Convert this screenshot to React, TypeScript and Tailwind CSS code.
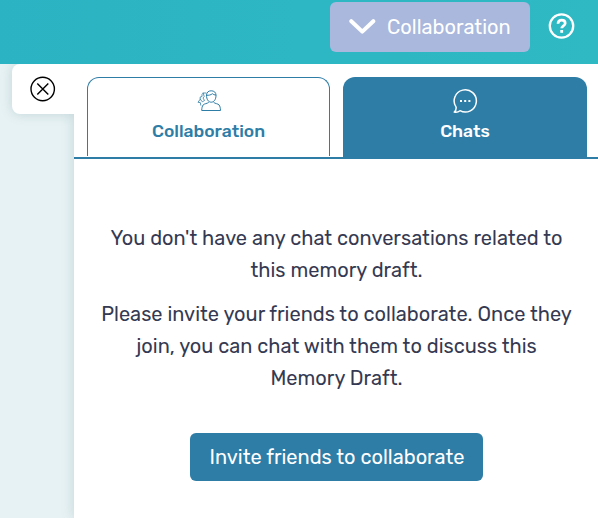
import type { ReactNode } from "react";

function FriendsIcon() {
  return (
    <svg width="24" height="22" viewBox="0 0 24 22" fill="none" stroke="currentColor" strokeWidth="1" strokeLinecap="round" strokeLinejoin="round">
      <path d="M9.500 5.500C9.500 2.300 11.300.8 14.200.8S19 2.300 19 5.500c0 3.900-2 6.700-4.800 6.700S9.500 9.400 9.500 5.500Z" />
      <path d="M9.600 5.300c2.300.1 4.300-.3 5.800-1.600.9.800 2 1.200 3.500 1.400" />
      <path d="M11.500 12.500c-1.200 1.300-4.200 1-5.400 2.500-.9 1.100-1.300 3-1.400 5.500h18.800c-.1-2.500-.5-4.400-1.400-5.500-1.200-1.500-4.100-1.200-5.300-2.500" />
      <path d="M9 3H6.200L5 4.500v2L3.200 7v2.200L1 12.300l2.300.3.500 2.600M6.200 3l1 3.500L6 8l1.500 2.500-2.200 1.300L3.200 9.200" strokeWidth=".8" />
    </svg>
  );
}

function ChatIcon() {
  return (
    <svg width="26" height="26" viewBox="0 0 26 26" fill="none" stroke="currentColor" strokeWidth="1.5" strokeLinejoin="round">
      <path d="M4.100 19.200A11.100 11.100 0 1 1 8 22.700C6.600 23.900 4.300 24.500 2.300 24.100c1.300-1.300 2-3.100 1.800-4.900Z" />
      <path d="M8 13h2M12.200 13h2M16.400 13h2" strokeWidth="2" />
    </svg>
  );
}

function Tab({ active, icon, label }: { active?: boolean; icon: ReactNode; label: string }) {
  return (
    <button
      className={
        active
          ? "flex h-20 w-[244px] flex-col items-center rounded-t-xl bg-[#2e7da7] text-white"
          : "flex h-[79px] w-[243px] flex-col items-center rounded-t-xl border border-b-0 border-[#2e7da7] bg-white text-[#2e7da7]"
      }
    >
      {icon}
      <span className="text-[17.500px] leading-6 font-medium">{label}</span>
    </button>
  );
}

export default function App() {
  return (
    <div className="flex h-[518px] w-[598px] flex-col overflow-hidden bg-white font-['Rubik','Roboto',sans-serif]">
      <header className="flex h-16 shrink-0 justify-end bg-linear-to-r from-[#2cb3c3] to-[#2eb9c3] pt-[2px]">
        <button className="flex h-[50px] w-[200px] items-center rounded-md bg-[#a9b8dc] pl-[19px] text-white">
          <svg width="27" height="16" viewBox="0 0 27 16" fill="none" stroke="currentColor" strokeWidth="4" strokeLinecap="round" strokeLinejoin="round">
            <path d="M2.300 2.200 13.300 12.600 24.300 2.200" />
          </svg>
          <span className="ml-[11px] whitespace-nowrap text-[20px] leading-6">Collaboration</span>
        </button>
        <svg className="mr-[23px] ml-[18px] mt-[10px]" width="27" height="28" viewBox="0 0 27 28" fill="none" stroke="white">
          <circle cx="13.500" cy="14" r="11.700" strokeWidth="2.300" />
          <path d="M10 11.700c.1-2.400 1.500-3.500 3.700-3.500 2.100 0 3.500 1.200 3.500 3 0 2.800-3.500 2.500-3.500 5.100" strokeWidth="2.700" />
          <path d="M13.700 18v2.800" strokeWidth="2.800" />
        </svg>
      </header>
      <div className="flex min-h-0 flex-1">
        <aside className="z-10 h-[64px] w-[74px] shrink-0 pl-3">
          <button className="flex h-[50px] w-[62px] items-center justify-center rounded-l-lg bg-white text-black shadow-[0_0_12px_rgba(70,110,120,0.22)] [clip-path:inset(0_0_-14px_-12px)]">
            <svg width="26" height="26" viewBox="0 0 26 26" fill="none" stroke="currentColor" strokeWidth="1.400">
              <circle cx="12.700" cy="13" r="11.700" />
              <path d="m7.300 7.500 11 11m0-11-11 11" />
            </svg>
          </button>
        </aside>
        <div className="-ml-[74px] flex w-[598px] shrink-0 bg-[#e7f2f4] pl-[74px]">
          <main className="flex flex-1 flex-col bg-white shadow-[0_0_12px_rgba(70,110,120,0.22)] [clip-path:inset(0_0_0_-14px)]">
            <nav className="flex h-[95px] shrink-0 gap-[13px] border-b-2 border-[#2e7da7] pt-[13px] pl-[13px]">
              <Tab icon={<span className="mt-3 mb-[7px]"><FriendsIcon /></span>} label="Collaboration" />
              <Tab active icon={<span className="mt-[11px] mb-[5px]"><ChatIcon /></span>} label="Chats" />
            </nav>
            <section className="flex flex-col items-center pr-6 pl-[25px] pt-[63px] text-center text-[20px] leading-8 text-[#353a52]">
              <p className="mb-3">You don't have any chat conversations related to this memory draft.</p>
              <p>
                Please invite your friends to collaborate. Once they join, you can chat with them to discuss this Memory Draft.
              </p>
              <button className="mt-[39px] h-12 w-[293px] rounded-md bg-[#2e7da7] pl-px whitespace-nowrap text-white">
                Invite friends to collaborate
              </button>
            </section>
          </main>
        </div>
      </div>
    </div>
  );
}
